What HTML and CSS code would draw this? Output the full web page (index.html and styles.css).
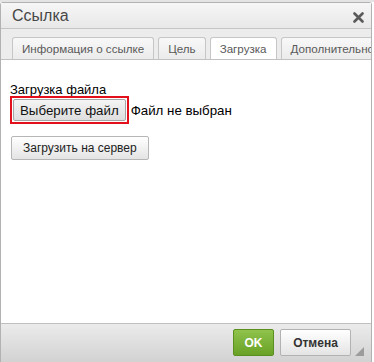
FILE: index.html
```html
<!DOCTYPE html>
<html lang="ru">
<head>
  <meta charset="UTF-8" />
  <title>Ссылка</title>
  <link rel="stylesheet" href="styles.css">
</head>
<body>
  <div class="editor-strip"></div>

  <div class="dialog">
    <div class="dialog-title">
      <span>Ссылка</span>
      <svg class="close" width="11" height="11" viewBox="0 0 11 11">
        <path d="M1.5 1.5 L9.5 9.5 M9.5 1.5 L1.5 9.5" stroke="#5a5a5a" stroke-width="2.6" stroke-linecap="round"/>
      </svg>
    </div>

    <div class="tabs">
      <span class="tab">Информация о ссылке</span>
      <span class="tab">Цель</span>
      <span class="tab selected">Загрузка</span>
      <span class="tab">Дополнительно</span>
    </div>

    <div class="dialog-body">
      <div class="upload-label">Загрузка файла</div>
      <div class="file-row">
        <span class="file-pick"><button class="file-btn">Выберите файл</button></span>
        <span class="file-name">Файл не выбран</span>
      </div>
      <button class="send-btn">Загрузить на сервер</button>
    </div>

    <div class="dialog-footer">
      <button class="btn-ok">OK</button>
      <button class="btn-cancel">Отмена</button>
      <span class="resizer"></span>
    </div>
  </div>
</body>
</html>
```

FILE: styles.css
```css
body { margin: 0; background: #fff; font-family: "Liberation Sans", Arial, sans-serif; width: 374px; height: 362px; overflow: hidden; }
.editor-strip { height: 2px; background: #e4e4e4; }

.dialog { width: 370px; border: 1px solid #b2b2b2; border-bottom: none; border-radius: 3px 3px 0 0; background: #fff; }

.dialog-title { height: 25px; display: flex; align-items: center; justify-content: space-between;
                padding: 0 7px 0 11px; font-size: 16px; color: #474747;
                background: linear-gradient(#f6f6f6, #e8e8e8); border-bottom: 1px solid #c4c4c4; }
.close { margin-top: 3px; }

.tabs { height: 30px; display: flex; align-items: flex-end; gap: 4px; padding-left: 11px;
        background: #ececec; border-bottom: 1px solid #c1c1c1; overflow: hidden; white-space: nowrap; }
.tab { height: 21px; line-height: 21px; padding: 0 9px; font-size: 11.6px; color: #595959;
       background: linear-gradient(#f8f8f8, #ebebeb); border: 1px solid #c6c6c6; border-bottom: none;
       border-radius: 3px 3px 0 0; }
.tab.selected { background: #fff; height: 22px; margin-bottom: -1px; }

.dialog-body { height: 240px; padding: 23px 10px 0 9px; background: #fff; }
.upload-label { font-size: 13px; line-height: 13px; color: #000; }
.file-row { display: flex; align-items: center; gap: 2px; }
.file-pick { display: inline-block; border: 2px solid #e3101c; padding: 1px; }
.file-btn { height: 22px; padding: 0 6px; font-family: inherit; font-size: 13.3px; color: #111;
            background: linear-gradient(#f4f4f4, #dedede); border: 1px solid #a5a5a5; border-radius: 2px; }
.file-name { font-size: 13.3px; color: #000; }

.send-btn { margin: 12px 0 0 1px; height: 24px; padding: 0 11px; font-family: inherit; font-size: 12px; color: #222;
            background: linear-gradient(#fff, #e4e4e4); border: 1px solid #b6b6b6; border-radius: 2px; }

.dialog-footer { position: relative; height: 39px; display: flex; justify-content: flex-end; align-items: flex-start;
                 gap: 6px; padding: 5px 20px 0 0; box-sizing: border-box;
                 background: linear-gradient(#ebebeb, #d2d2d2); border-top: 1px solid #bfbfbf; }
.dialog-footer button { height: 27px; font-family: inherit; font-size: 12px; font-weight: bold; border-radius: 2px; }
.btn-ok { width: 41px; color: #fff; background: linear-gradient(#8fc34c, #69a126); border: 1px solid #5b9020; }
.btn-cancel { width: 71px; color: #333; background: linear-gradient(#fff, #e4e4e4); border: 1px solid #b2b2b2; }
.resizer { position: absolute; right: 7px; bottom: 6px; width: 0; height: 0;
           border-left: 9px solid transparent; border-bottom: 9px solid #9c9c9c; }
```
